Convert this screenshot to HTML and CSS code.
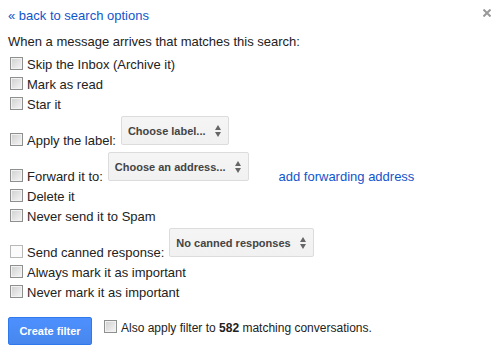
FILE: index.html
```html
<!DOCTYPE html>
<html>
<head>
<meta charset="utf-8">
<title>Create filter</title>
<link rel="stylesheet" href="styles.css">
</head>
<body>
<div class="dialog">
	<a class="back" href="#">&laquo; back to search options</a>
	<a class="close" href="#" title="Close"><svg width="8" height="8" viewBox="0 0 8 8"><path d="M0.5 0.5L7.5 7.5M7.5 0.5L0.5 7.5" stroke="#999" stroke-width="2"/></svg></a>
	<div class="intro">When a message arrives that matches this search:</div>
	<div class="opt"><input type="checkbox" class="cb"><label>Skip the Inbox (Archive it)</label></div>
	<div class="opt"><input type="checkbox" class="cb"><label>Mark as read</label></div>
	<div class="opt"><input type="checkbox" class="cb"><label>Star it</label></div>
	<div class="opt"><input type="checkbox" class="cb"><label>Apply the label:</label><div class="sel">Choose label...<span class="arr"></span></div></div>
	<div class="opt"><input type="checkbox" class="cb"><label>Forward it to:</label><div class="sel">Choose an address...<span class="arr"></span></div><a class="addfwd" href="#">add forwarding address</a></div>
	<div class="opt"><input type="checkbox" class="cb"><label>Delete it</label></div>
	<div class="opt"><input type="checkbox" class="cb"><label>Never send it to Spam</label></div>
	<div class="opt"><input type="checkbox" class="cb" disabled><label>Send canned response:</label><div class="sel">No canned responses<span class="arr"></span></div></div>
	<div class="opt"><input type="checkbox" class="cb"><label>Always mark it as important</label></div>
	<div class="opt"><input type="checkbox" class="cb"><label>Never mark it as important</label></div>
	<div class="foot">
		<button class="btn">Create filter</button>
		<input type="checkbox" class="cb">
		<label>Also apply filter to <b>582</b> matching conversations.</label>
	</div>
</div>
</body>
</html>
```
FILE: styles.css
```css
*{margin:0;padding:0;box-sizing:border-box;}
body{background:#fff;font:13px/20px "Liberation Sans",Arial,sans-serif;color:#222;}
.dialog{position:relative;padding:6px 8px;}
.dialog a{color:#15c;text-decoration:none;}
.back{display:block;}
.close{position:absolute;top:9px;right:10px;width:8px;height:8px;line-height:0;}
.intro{margin-top:6px;margin-bottom:3px;}
.opt{display:flex;align-items:flex-end;}
.opt label,.foot label{line-height:20px;white-space:nowrap;}
.cb{-webkit-appearance:none;appearance:none;width:13px;height:13px;flex:none;border:1px solid #8e8f8f;background:linear-gradient(135deg,#cfcfcf,#f6f6f6);box-shadow:inset 0 0 0 1px #f2f2f2;}
.opt .cb{margin:0 4px 5px 2px;}
.cb:disabled{border-color:#b8b8b8;background:#fbfbfb;box-shadow:none;}
.sel{display:flex;align-items:center;gap:9px;height:29px;margin:1px 0 6px 5px;padding:0 6px;border:1px solid #dcdcdc;border-radius:2px;background:linear-gradient(#f5f5f5,#f1f1f1);font-size:11px;font-weight:bold;color:#444;white-space:nowrap;}
.arr{position:relative;width:7px;height:12px;}
.arr:before,.arr:after{content:"";position:absolute;left:0;border-left:3.5px solid transparent;border-right:3.5px solid transparent;}
.arr:before{top:0;border-bottom:5px solid #666;}
.arr:after{bottom:0;border-top:5px solid #666;}
.addfwd{margin-left:30px;line-height:20px;}
.foot{display:flex;align-items:flex-start;margin-top:14px;}
.btn{width:84px;height:28px;padding:0 8px;border:1px solid #3079ed;border-radius:2px;background:linear-gradient(#4d90fe,#4787ed);color:#fff;font:bold 11px "Liberation Sans",Arial,sans-serif;}
.foot .cb{margin:3px 4px 0 12px;}
.foot label{margin-top:1px;font-size:12px;}
```
